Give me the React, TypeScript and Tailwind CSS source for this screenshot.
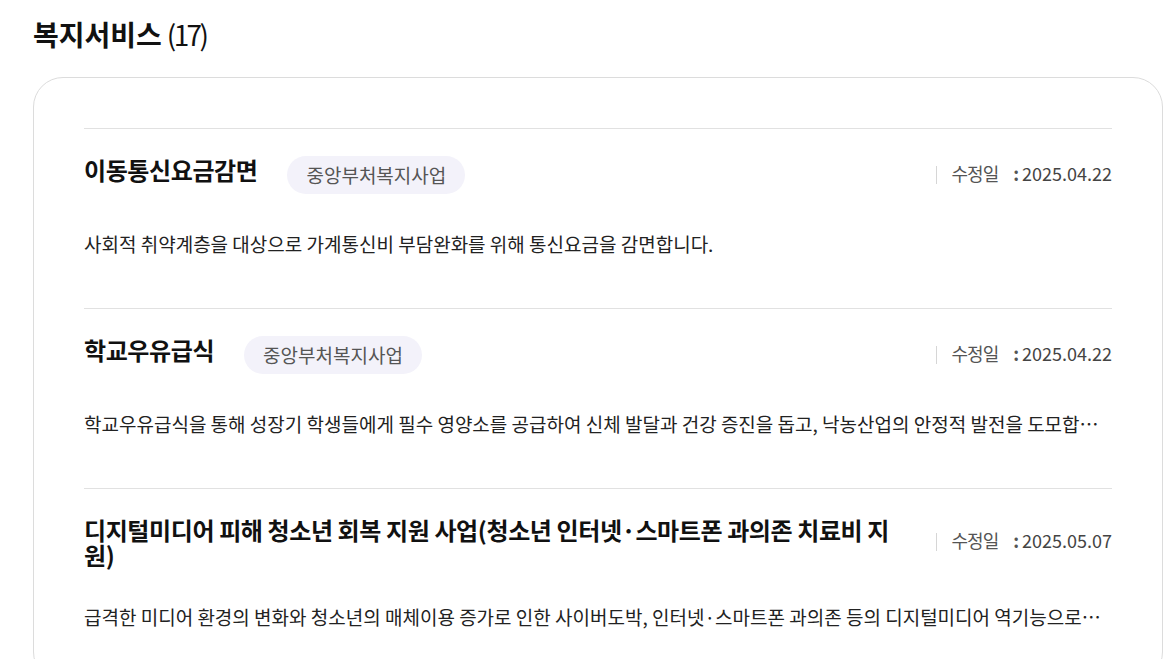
import React from 'react';

type Service = {
  title: string;
  badge?: string;
  date: string;
  desc: string;
};

const SERVICES: Service[] = [
  {
    title: '이동통신요금감면',
    badge: '중앙부처복지사업',
    date: '2025.04.22',
    desc: '사회적 취약계층을 대상으로 가계통신비 부담완화를 위해 통신요금을 감면합니다.',
  },
  {
    title: '학교우유급식',
    badge: '중앙부처복지사업',
    date: '2025.04.22',
    desc: '학교우유급식을 통해 성장기 학생들에게 필수 영양소를 공급하여 신체 발달과 건강 증진을 돕고, 낙농산업의 안정적 발전을 도모합니다.',
  },
  {
    title: '디지털미디어 피해 청소년 회복 지원 사업(청소년 인터넷·스마트폰 과의존 치료비 지원)',
    date: '2025.05.07',
    desc: '급격한 미디어 환경의 변화와 청소년의 매체이용 증가로 인한 사이버도박, 인터넷·스마트폰 과의존 등의 디지털미디어 역기능으로인한 피해를 입은 청소년을 지원합니다.',
  },
];

const ServiceItem: React.FC<{ item: Service }> = ({ item }) => (
  <li className="border-t border-[#e1e1e1] pt-[27px] pb-[50px]">
    <div className="flex items-center">
      <div className="flex flex-1 items-start min-w-0 mr-[32px]">
        <h3 className="text-[24px] leading-[25px] pt-px font-bold text-[#111] tracking-[-0.4px]">
          {item.title}
        </h3>
        {item.badge && (
          <span className="ml-[30px] shrink-0 h-[38px] px-[19px] flex items-center rounded-full bg-[#f3f2fa] text-[19px] text-[#555]">
            {item.badge}
          </span>
        )}
      </div>
      <div className="shrink-0 flex items-center pb-[3px] text-[18px] text-[#555]">
        <span className="w-px h-[18px] mt-[3px] bg-[#d6d6d6] mr-[15px]" />
        <span className="tracking-[-1px]">수정일</span>
        <span className="ml-[15px] mr-[3px] font-bold">:</span>
        <span className="text-[#444]">{item.date}</span>
      </div>
    </div>
    <p className="mt-[36px] text-[19px] leading-[28px] text-[#222] truncate">
      {item.desc}
    </p>
  </li>
);

export default function App() {
  return (
    <div
      className="min-h-screen bg-white pl-[33px] pt-[16px]"
      style={{ fontFamily: '"Noto Sans CJK KR", "Noto Sans", sans-serif' }}
    >
      <h2 className="text-[28px] leading-[36px] font-bold text-[#111]">
        복지서비스<span className="ml-[5px] font-normal tracking-[-2.6px]">(17)</span>
      </h2>
      <div className="mt-[25px] w-[1130px] border border-[#dcdcdc] rounded-[30px] px-[50px] pt-[50px]">
        <ul>
          {SERVICES.map((s) => (
            <ServiceItem key={s.title} item={s} />
          ))}
        </ul>
      </div>
    </div>
  );
}
